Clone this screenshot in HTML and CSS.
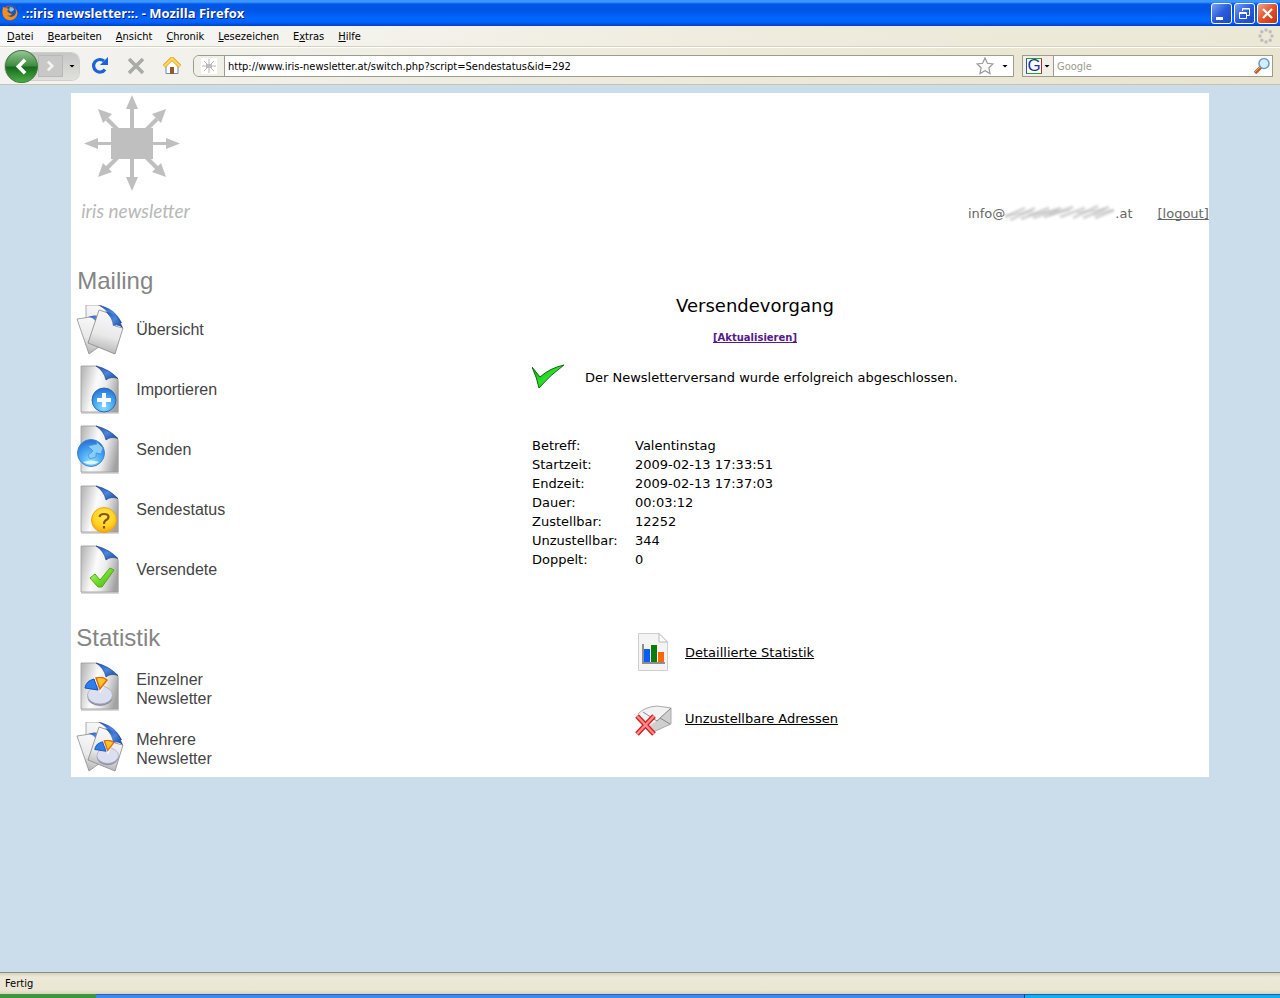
FILE: index.html
```html
<!DOCTYPE html>
<html lang="de">
<head>
<meta charset="utf-8">
<title>.::iris newsletter::. - Mozilla Firefox</title>
<link rel="stylesheet" href="styles.css">
</head>
<body>
<svg class="defs" aria-hidden="true">
  <defs>
    <linearGradient id="paper" x1="0" y1="0.3" x2="1" y2="0.6">
      <stop offset="0" stop-color="#bcbcbc"/><stop offset="0.4" stop-color="#fcfcfc"/><stop offset="0.65" stop-color="#ececec"/><stop offset="1" stop-color="#a2a2a2"/>
    </linearGradient>
    <linearGradient id="sheet" x1="0.7" y1="0" x2="0.5" y2="1">
      <stop offset="0" stop-color="#fafafa"/><stop offset="0.6" stop-color="#e9e9e9"/><stop offset="1" stop-color="#b2b2b2"/>
    </linearGradient>
    <linearGradient id="fold" x1="0" y1="0" x2="1" y2="1">
      <stop offset="0" stop-color="#1d4fae"/><stop offset="0.5" stop-color="#4d86dc"/><stop offset="1" stop-color="#123f92"/>
    </linearGradient>
    <radialGradient id="ball" cx="0.5" cy="0.8" r="0.8">
      <stop offset="0" stop-color="#8fe0ff"/><stop offset="0.5" stop-color="#4aa8f5"/><stop offset="1" stop-color="#2470d0"/>
    </radialGradient>
    <radialGradient id="amber" cx="0.5" cy="0.35" r="0.7">
      <stop offset="0" stop-color="#ffe95c"/><stop offset="0.6" stop-color="#ffd21e"/><stop offset="1" stop-color="#f39a10"/>
    </radialGradient>
    <linearGradient id="lime" x1="0" y1="0" x2="1" y2="1">
      <stop offset="0" stop-color="#d0fa90"/><stop offset="0.5" stop-color="#70dd28"/><stop offset="1" stop-color="#48ae14"/>
    </linearGradient>
    <linearGradient id="green" x1="0" y1="0" x2="1" y2="1">
      <stop offset="0" stop-color="#129a12"/><stop offset="0.5" stop-color="#2be02b"/><stop offset="1" stop-color="#067806"/>
    </linearGradient>
    <linearGradient id="back" x1="0" y1="0" x2="0" y2="1">
      <stop offset="0" stop-color="#9ac79a"/><stop offset="0.48" stop-color="#3f8b3f"/><stop offset="0.52" stop-color="#17691b"/><stop offset="1" stop-color="#4caf45"/>
    </linearGradient>
    <symbol id="doc" viewBox="0 0 50 50">
      <path d="M5 3H22L43 16V49H5Z" fill="#000" opacity="0.15"/>
      <path d="M5 1H20Q33 5 42 14V47H5Z" fill="url(#paper)" stroke="#999" stroke-width="0.8"/>
      <path d="M20 1Q33 4 42 13.500Q35 11 30 15Q28 6 20 1Z" fill="url(#fold)" stroke="#173f8c" stroke-width="0.6"/>
    </symbol>
    <symbol id="docs" viewBox="0 0 50 50">
      <path d="M10 0H24Q32 3 38 11V40H10Z" fill="url(#sheet)" stroke="#9a9a9a" stroke-width="0.8"/>
      <path d="M22 0Q38 2 46 18L40 19Q34 6 22 0Z" fill="url(#fold)"/>
      <path d="M1 14L21 11L28 38L13 49Z" fill="url(#sheet)" stroke="#8f8f8f" stroke-width="0.8"/>
      <path d="M12 12Q19 9 24 12L20 17Q17 12 12 12Z" fill="url(#fold)"/>
      <path d="M23 5Q31 6 37 13L39 21L47 23L39 49L12 38Z" fill="url(#sheet)" stroke="#888" stroke-width="0.8"/>
      <path d="M29 6Q42 9 47 23Q42 19 37 21Q36 12 29 6Z" fill="url(#fold)"/>
    </symbol>
    <symbol id="pie" viewBox="0 0 30 30">
      <ellipse cx="17" cy="20" rx="12.500" ry="9" fill="#8d91a8"/>
      <ellipse cx="17" cy="18" rx="12.500" ry="9" fill="#dcdff0" stroke="#a6a9bd" stroke-width="0.8"/>
      <path d="M17 17L16 9L21 9Z" fill="#fff"/>
      <path d="M15 13L2 11Q3 4 11 2Z" fill="#2e7fee" stroke="#1650b4"/>
      <path d="M17 12L13 1Q19 -1 24 3Z" fill="#ffc32a" stroke="#e06c10" stroke-width="1.500"/>
    </symbol>
  </defs>
</svg>

<header class="titlebar">
  <svg class="fox" viewBox="0 0 16 16" aria-hidden="true">
    <circle cx="8" cy="8" r="7.500" fill="#d95e0c"/><circle cx="9" cy="6.500" r="5.500" fill="#2456a8"/>
    <path d="M8 2Q12 2 12 5L9 7L7 5Z" fill="#7cc4ef"/>
    <path d="M1 2L4 3L7 4L5 6L7 8L10 9Q8 12 5 10Q9 14 13 10Q15 7 13 3Q17 8 14 12Q10 17 4 14Q-1 10 1 2Z" fill="#f38f1c"/>
  </svg>
  <span class="wintitle">.::iris newsletter::. - Mozilla Firefox</span>
  <button class="winbtn" aria-label="Minimieren"><svg viewBox="0 0 19 19"><path d="M4 13H11V16H4Z" fill="#fff"/></svg></button>
  <button class="winbtn" aria-label="Verkleinern"><svg viewBox="0 0 19 19" fill="none" stroke="#fff"><path d="M7.500 7V4.500H14.500V11.500H12M7 5H15M4.500 8.500H11.500V14.500H4.500ZM4 9.500H12"/></svg></button>
  <button class="winbtn close" aria-label="Schließen"><svg viewBox="0 0 19 19"><path d="M5 5L14 14M14 5L5 14" stroke="#fff" stroke-width="2.200"/></svg></button>
</header>

<nav class="menubar">
  <button><u>D</u>atei</button><button><u>B</u>earbeiten</button><button><u>A</u>nsicht</button><button><u>C</u>hronik</button><button><u>L</u>esezeichen</button><button>E<u>x</u>tras</button><button><u>H</u>ilfe</button>
  <svg class="throbber" viewBox="0 0 16 16" fill="#bdbdbd" aria-hidden="true"><circle cx="8" cy="2" r="1.700"/><circle cx="12.200" cy="3.800" r="1.700"/><circle cx="14" cy="8" r="1.700"/><circle cx="12.200" cy="12.200" r="1.700"/><circle cx="8" cy="14" r="1.700"/><circle cx="3.800" cy="12.200" r="1.700"/><circle cx="2" cy="8" r="1.700"/><circle cx="3.800" cy="3.800" r="1.700"/></svg>
</nav>

<div class="toolbar">
  <div class="history">
    <button class="backbtn" aria-label="Zurück"><svg viewBox="0 0 32 32"><circle cx="16" cy="16" r="15.500" fill="url(#back)" stroke="#3d7c3d"/><path d="M19.500 9.500L13 16L19.500 22.500" fill="none" stroke="#fff" stroke-width="3.500"/></svg></button>
    <button class="fwdbtn" aria-label="Vor"><svg viewBox="0 0 26 22"><path d="M10 6L15 11L10 16" fill="none" stroke="#f4f4f4" stroke-width="3"/></svg></button>
    <button class="arrow" aria-label="Verlauf"></button>
  </div>
  <button class="tool" aria-label="Neu laden"><svg viewBox="0 0 18 18"><path d="M14 12.500A6.300 6.300 0 1 1 13 4" fill="none" stroke="#1d63d8" stroke-width="3.200"/><path d="M17 0V8H9Z" fill="#1d63d8"/></svg></button>
  <button class="tool" aria-label="Stopp"><svg viewBox="0 0 18 18"><path d="M2 2L16 16M16 2L2 16" stroke="#aaaaa6" stroke-width="3.600"/></svg></button>
  <button class="tool" aria-label="Startseite"><svg viewBox="0 0 18 18"><path d="M3 9V16.500H15V9L9 3Z" fill="#fff" stroke="#6d86c6"/><path d="M1 9.500L9 1.500L17 9.500" fill="none" stroke="#d99a1a" stroke-width="3.800"/><path d="M1 9.500L9 1.700L17 9.500" fill="none" stroke="#ffd75a" stroke-width="2.400"/><path d="M7 10H11V17H7Z" fill="#8b5a30"/></svg></button>
  <div class="urlbar">
    <svg class="favicon" viewBox="0 0 16 16" aria-hidden="true"><path d="M0 0H16V16H0Z" fill="#fff"/><path d="M8 1V15M1 8H15M3 3L13 13M13 3L3 13" stroke="#b5b5b5"/><path d="M5 6H11V10H5Z" fill="#bbb"/></svg>
    <input type="text" aria-label="Adresse" value="http://www.iris-newsletter.at/switch.php?script=Sendestatus&amp;id=292">
    <svg class="star" viewBox="0 0 18 18" aria-hidden="true"><path d="M9 1L11.400 6.300L17 6.900L12.900 10.800L14 16.500L9 13.700L4 16.500L5.100 10.800L1 6.900L6.600 6.300Z" fill="#fafafa" stroke="#999" stroke-width="1.200"/></svg>
    <button class="arrow" aria-label="Adressliste"></button>
  </div>
  <div class="search">
    <button class="engine" aria-label="Suchmaschine Google"><span class="g">G</span><i class="arrow"></i></button>
    <input type="text" aria-label="Suche" placeholder="Google">
    <svg class="lens" viewBox="0 0 18 18" aria-hidden="true"><path d="M2 16L8 10" stroke="#b8632c" stroke-width="3.500"/><path d="M2 15L7 10" stroke="#e8a868"/><circle cx="11" cy="6.500" r="5" fill="#d3efff" stroke="#6f9dcd" stroke-width="1.600"/></svg>
  </div>
</div>

<main class="viewport">
  <div class="page">
    <div class="top">
      <div class="logo">
        <svg viewBox="0 0 98 98" fill="#bfbfbf" aria-hidden="true">
          <path d="M28 33H70V64H28Z"/>
          <path d="M47 12H51V86H47ZM12 47H86V50H12Z"/>
          <path d="M49 0L55 14H43ZM49 96L55 82H43ZM1 48.500L15 43V54ZM97 48.500L83 43V54Z"/>
          <path d="M24 24L36 36M74 24L62 36M24 73L36 61M74 73L62 61" stroke="#bfbfbf" stroke-width="4"/>
          <path d="M15 14L29 19L20 28ZM83 14L69 19L78 28ZM15 82L29 77L20 68ZM83 82L69 77L78 68Z"/>
        </svg>
        <span class="brand">iris newsletter</span>
      </div>
      <div class="account">
        <span class="mail">info@<svg class="smudge" viewBox="0 0 110 16" role="img" aria-label="unkenntlich"><g stroke="#b5b5b5" stroke-width="3" opacity="0.55"><path d="M0 12L20 3M5 15L30 3M16 14L44 3M28 13L56 3M39 12L68 2M55 12L80 3M68 13L93 1M78 13L104 2M90 13L109 5"/></g><path d="M0 11L28 6M23 10L53 5M44 10L65 5M72 8L100 4M88 10L108 5" stroke="#999" opacity="0.6"/></svg>.at</span>
        <a href="#">[logout]</a>
      </div>
    </div>
    <div class="columns">
      <nav class="side">
        <h2>Mailing</h2>
        <a href="#"><svg viewBox="0 0 50 50"><use href="#docs"/></svg><span>Übersicht</span></a>
        <a href="#"><svg viewBox="0 0 50 50"><use href="#doc"/><circle cx="28" cy="35" r="12" fill="url(#ball)" stroke="#2469c0"/><path d="M28 28V42M21 35H35" stroke="#fff" stroke-width="4"/></svg><span>Importieren</span></a>
        <a href="#"><svg viewBox="0 0 50 50"><use href="#doc"/><circle cx="15" cy="28" r="13.500" fill="url(#ball)" stroke="#3b86d2"/><path d="M12 21L21 19L20 16L27 23L25 29L20 28L20 32L14 34L12 30L17 26Z" fill="#86cdfa" stroke="#3f92e0" stroke-width="0.8"/><path d="M7 37Q15 34 23 37Q15 42 7 37Z" fill="#d9f7ff"/></svg><span>Senden</span></a>
        <a href="#"><svg viewBox="0 0 50 50"><use href="#doc"/><circle cx="28" cy="35" r="12.500" fill="url(#amber)" stroke="#eda218"/><path d="M23.500 32Q24 29 28 29Q32.500 29 32.500 32Q32.500 34 29.500 35.500Q28 36.500 28 39M28 41V43.500" fill="none" stroke="#8a5208" stroke-width="2.200"/></svg><span>Sendestatus</span></a>
        <a href="#"><svg viewBox="0 0 50 50"><use href="#doc"/><path d="M14 33L19 29L24 35L34 23L38 25L26 42H22Z" fill="url(#lime)" stroke="#4fa81d"/></svg><span>Versendete</span></a>
        <h2 class="second">Statistik</h2>
        <a href="#"><svg viewBox="0 0 50 50"><use href="#doc"/><use href="#pie" x="7" y="15" width="30" height="30"/></svg><span>Einzelner<br>Newsletter</span></a>
        <a href="#"><svg viewBox="0 0 50 50"><use href="#docs"/><use href="#pie" x="17" y="18" width="26" height="26"/></svg><span>Mehrere<br>Newsletter</span></a>
      </nav>
      <section class="content">
        <h1>Versendevorgang</h1>
        <a class="refresh" href="#">[Aktualisieren]</a>
        <div class="report">
          <p class="message"><svg viewBox="0 0 34 26" aria-hidden="true"><path d="M0 3L8 13Q18 4 32 1Q18 11 7 24Q5 14 0 3Z" fill="url(#green)" stroke="#0c6c0c"/></svg>Der Newsletterversand wurde erfolgreich abgeschlossen.</p>
          <table>
            <tr><th scope="row">Betreff:</th><td>Valentinstag</td></tr>
            <tr><th scope="row">Startzeit:</th><td>2009-02-13 17:33:51</td></tr>
            <tr><th scope="row">Endzeit:</th><td>2009-02-13 17:37:03</td></tr>
            <tr><th scope="row">Dauer:</th><td>00:03:12</td></tr>
            <tr><th scope="row">Zustellbar:</th><td>12252</td></tr>
            <tr><th scope="row">Unzustellbar:</th><td>344</td></tr>
            <tr><th scope="row">Doppelt:</th><td>0</td></tr>
          </table>
          <ul class="links">
            <li><svg viewBox="0 0 38 40" aria-hidden="true"><path d="M3.500 1.500H24L32.500 10V38.500H3.500Z" fill="#f4f4f4" stroke="#cfcfcf"/><path d="M24 1.500V10H32.500Z" fill="#fff" stroke="#bbb"/><path d="M8 12V31H30" fill="none" stroke="#8e8e8e" stroke-width="2"/><path d="M9 17H15V30H9Z" fill="#0a5cff"/><path d="M16 13H22V30H16Z" fill="#0b7d0b"/><path d="M23 20H29V30H23Z" fill="#ff650a"/></svg><a href="#">Detaillierte Statistik</a></li>
            <li><svg viewBox="0 0 38 40" aria-hidden="true"><path d="M3 16Q9 9 22 8L36 10V26L20 32L6 28Z" fill="#f2f2f2"/><path d="M20 24L36 10V26L18 34L14 28Z" fill="#cfcfcf"/><path d="M3 16Q9 9 22 8L36 10V26L18 34" fill="none" stroke="#aaa"/><path d="M8 14L22 23L36 10M25 20L35 26" fill="none" stroke="#888"/><path d="M2 18L19 36M19 18L2 36" stroke="#d31f1f" stroke-width="5"/><path d="M2 18L19 36M19 18L2 36" stroke="#ff8a8a" stroke-width="2.500"/></svg><a href="#">Unzustellbare Adressen</a></li>
          </ul>
        </div>
      </section>
    </div>
  </div>
</main>

<footer class="statusbar">Fertig</footer>
<div class="taskbar"><div class="start"></div><div class="tasks"></div><div class="tray"></div></div>
</body>
</html>
```
FILE: styles.css
```css
* { box-sizing: border-box; }

body {
  margin: 0;
  min-height: 100vh;
  display: flex;
  flex-direction: column;
  background: #cbdceb;
  font-family: "DejaVu Sans Condensed", "DejaVu Sans", sans-serif;
  font-size: 11px;
  color: #000;
}

button { border: 0; padding: 0; background: none; font: inherit; color: inherit; }
a { text-decoration-skip-ink: none; }
svg { display: block; flex: none; }
.defs { position: absolute; width: 0; height: 0; }

.titlebar {
  height: 26px;
  display: flex;
  align-items: center;
  gap: 2px;
  padding: 0 2px;
  background: linear-gradient(#3c96ff 0, #3c96ff 2px, #0458e8 4px, #0054e3 10px, #0066ff 18px, #0064fb 22px, #0040cc 26px);
}
.fox { width: 16px; height: 16px; }
.wintitle {
  flex: 1;
  padding-left: 2px;
  font: bold 13px/16px "Open Sans", sans-serif;
  color: #fff;
  text-shadow: 1px 1px 0 #0a1883;
}
.winbtn {
  width: 21px;
  height: 21px;
  border: 1px solid #fff;
  border-radius: 3px;
  background: linear-gradient(135deg, #7ba1ef, #2a5be0 50%, #1c47c0);
}
.winbtn.close { background: linear-gradient(135deg, #f0a38a, #e3532b 50%, #c33208); }
.winbtn svg { width: 19px; height: 19px; }

.menubar {
  height: 21px;
  display: flex;
  align-items: center;
  gap: 14px;
  padding: 0 6px 0 7px;
  background: linear-gradient(90deg, #f7f8f8, #efebdd 60%, #ebe8d6);
  border-bottom: 1px solid #d8d2bd;
}
.throbber { width: 16px; height: 16px; margin-left: auto; }

.toolbar {
  height: 38px;
  display: flex;
  align-items: center;
  padding: 0 7px 0 5px;
  background: linear-gradient(90deg, #f3f3f1, #ece9d8 60%, #e8e4cf);
  border-top: 1px solid #fff;
  border-bottom: 1px solid #c8c3ad;
}
.history {
  width: 74px;
  height: 27px;
  display: flex;
  align-items: center;
  margin-right: 12px;
  border-radius: 14px 8px 8px 14px;
  background: linear-gradient(#c6c6c4, #e0e0dd);
  box-shadow: 0 0 0 1px #cfcfcb;
}
.backbtn svg { width: 33px; height: 33px; }
.fwdbtn { height: 22px; background: #c8c8c6; border: 1px solid #b9b9b7; }
.fwdbtn svg { width: 23px; height: 20px; }
.arrow {
  width: 6px;
  height: 3px;
  background: #000;
  clip-path: polygon(0 0, 100% 0, 50% 100%);
}
.history .arrow { margin-left: 6px; }
.tool { margin-right: 18px; }
.tool svg { width: 18px; height: 18px; }
.urlbar, .search {
  height: 22px;
  display: flex;
  align-items: center;
  background: #fff;
  border: 1px solid #9c9b8c;
}
.urlbar { flex: 1; margin: 0 8px 0 -6px; border-radius: 6px 0 0 6px; padding-right: 5px; }
.favicon { width: 31px; height: 20px; padding: 2px 7px; background: #f1f0e8; border-right: 1px solid #9c9b8c; border-radius: 6px 0 0 6px; }
input {
  flex: 1;
  min-width: 0;
  border: 0;
  padding: 0 3px;
  background: transparent;
  font: inherit;
  color: #000;
}
input::placeholder { color: #9b9a8d; opacity: 1; }
.star { width: 18px; height: 18px; margin-right: 8px; }
.search { width: 251px; padding-right: 1px; }
.engine { height: 20px; display: flex; align-items: center; gap: 2px; padding: 0 3px; background: #f1f0e8; border-right: 1px solid #9c9b8c; }
.g {
  width: 16px;
  height: 16px;
  font: 17px/14px "Liberation Sans", sans-serif;
  color: #14349c;
  background: #fff;
  border: 1px solid;
  border-color: #24a824 #c42020 #24a824 #2a50c8;
}
.lens { width: 18px; height: 18px; }

.viewport { flex: 1; padding: 8px; }
.page {
  width: 90%;
  margin: 0 auto;
  background: #fff;
  font-family: "DejaVu Sans", sans-serif;
  font-size: 13px;
}
.top { display: flex; justify-content: space-between; min-height: 169px; }
.logo { padding: 2px 0 0 10px; }
.logo svg { width: 98px; height: 98px; margin-left: 2px; }
.brand { display: block; padding-top: 4px; font: italic 19px/28px Lato, sans-serif; color: #b8b8b8; }
.account { display: flex; align-items: center; gap: 25px; height: 24px; margin-top: 108px; color: #666; }
.account a { color: #666; }
.mail { display: flex; align-items: center; }
.smudge { width: 110px; height: 16px; filter: blur(1px); }

.columns { display: flex; }
.side { width: 230px; flex: none; padding-left: 5px; font-family: "Liberation Sans", sans-serif; }
.side h2 { margin: 0; padding-left: 1px; font-size: 24px; font-weight: normal; line-height: 38px; color: #858585; }
.side .second { margin-top: 20px; padding: 0; }
.side a {
  display: flex;
  align-items: center;
  gap: 10px;
  height: 59px;
  margin-bottom: 1px;
  font-size: 16px;
  line-height: 19px;
  color: #444;
  text-decoration: none;
}
.side .second ~ a { height: 60px; margin: 0; }
.side .second ~ a span { padding-top: 4px; }
.side svg { width: 50px; height: 50px; }

.content { flex: 1; display: flex; flex-direction: column; align-items: center; padding-top: 33px; }
.content h1 { margin: 0 0 11px; font-size: 18px; line-height: 22px; font-weight: normal; }
.refresh { font-size: 10px; line-height: 20px; font-weight: bold; color: #551a8b; }
.report { width: 446px; }
.message { display: flex; align-items: center; gap: 19px; height: 26px; margin: 16px 0 46px; }
.message svg { width: 34px; height: 26px; }
table { border-collapse: collapse; }
th, td { padding: 0; height: 19px; font-weight: normal; text-align: left; line-height: 19px; }
th { width: 103px; }
.links { margin: 0; padding: 63px 0 0 103px; list-style: none; display: grid; gap: 26px; }
.links li { display: flex; align-items: center; gap: 12px; }
.links svg { width: 38px; height: 40px; }
.links a { color: #000; }

.statusbar {
  height: 22px;
  padding: 0 5px;
  line-height: 21px;
  background: linear-gradient(#d6d2c2, #ece9d8 4px, #e9e6d3 17px, #d9d4bd);
  border-top: 1px solid #8d8c80;
}
.taskbar { height: 4px; display: flex; background: #2c6fdc; }
.start { width: 96px; background: #3c963c; }
.tasks { flex: 1; border-top: 1px solid #2462d4; background: #4088e8; }
.tray { width: 20%; border-top: 1px solid #0d62c8; border-left: 1px solid #0a3a80; background: #14aef0; }
```
